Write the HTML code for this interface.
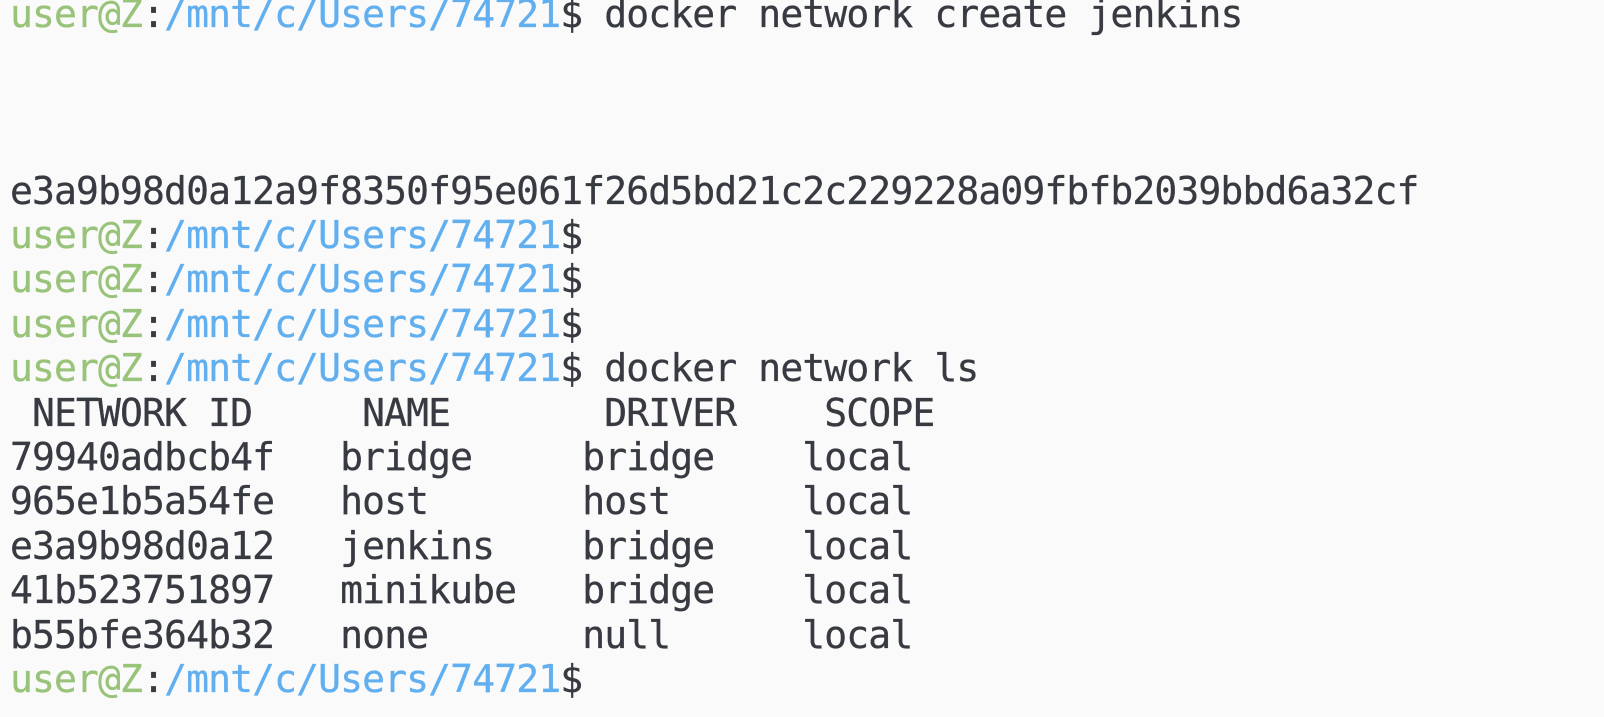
<!DOCTYPE html>
<html><head><style>
html,body{margin:0;padding:0;background:#fafafa;width:1604px;height:717px;overflow:hidden}
div{position:absolute;left:10px;white-space:pre;font-family:"DejaVu Sans Mono","Liberation Mono",monospace;font-size:38px;letter-spacing:-0.87px;line-height:44px;height:44px;color:#383a42;-webkit-text-stroke:0.3px currentColor}
.g{color:#98c379}.b{color:#61afef}
</style></head><body>
<div style="top:-8.35px"><span class="g">user@Z</span>:<span class="b">/mnt/c/Users/74721</span>$ docker network create jenkins</div>
<div style="top:168.5px">e3a9b98d0a12a9f8350f95e061f26d5bd21c2c229228a09fbfb2039bbd6a32cf</div>
<div style="top:213px"><span class="g">user@Z</span>:<span class="b">/mnt/c/Users/74721</span>$</div>
<div style="top:257.4px"><span class="g">user@Z</span>:<span class="b">/mnt/c/Users/74721</span>$</div>
<div style="top:301.8px"><span class="g">user@Z</span>:<span class="b">/mnt/c/Users/74721</span>$</div>
<div style="top:346.2px"><span class="g">user@Z</span>:<span class="b">/mnt/c/Users/74721</span>$ docker network ls</div>
<div style="top:390.6px"> NETWORK ID     NAME       DRIVER    SCOPE</div>
<div style="top:435px">79940adbcb4f   bridge     bridge    local</div>
<div style="top:479.4px">965e1b5a54fe   host       host      local</div>
<div style="top:523.8px">e3a9b98d0a12   jenkins    bridge    local</div>
<div style="top:568.2px">41b523751897   minikube   bridge    local</div>
<div style="top:612.6px">b55bfe364b32   none       null      local</div>
<div style="top:657px"><span class="g">user@Z</span>:<span class="b">/mnt/c/Users/74721</span>$</div>
</body></html>
